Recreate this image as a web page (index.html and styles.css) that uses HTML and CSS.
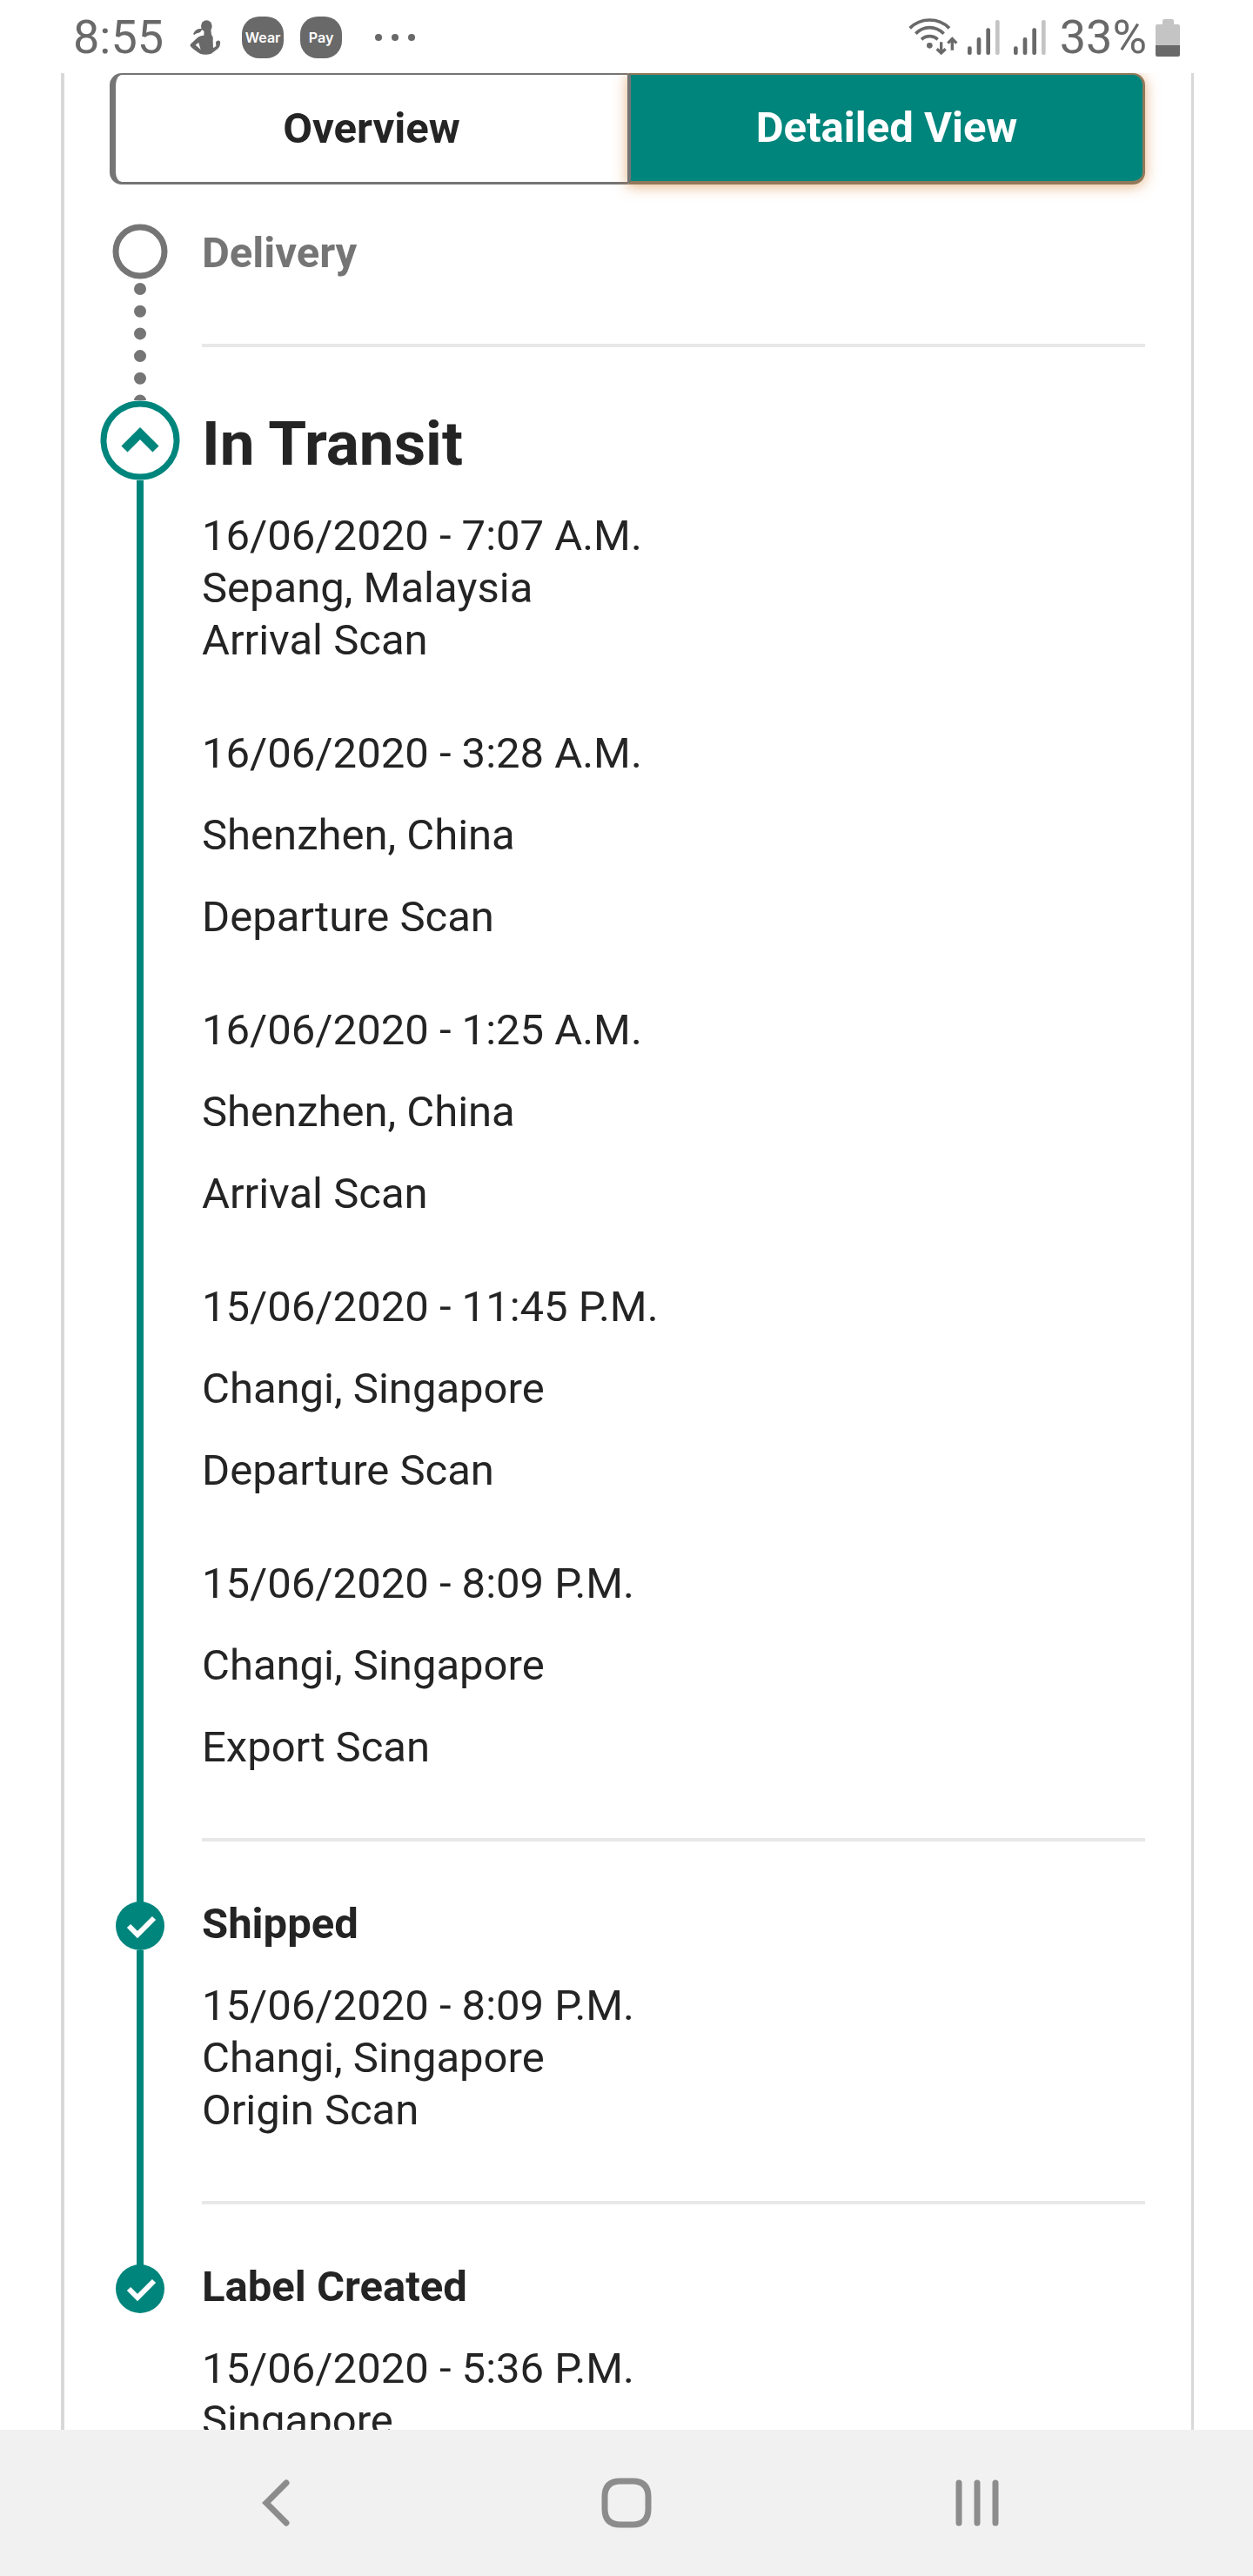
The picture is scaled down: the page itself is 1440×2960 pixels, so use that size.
FILE: index.html
```html
<!DOCTYPE html>
<html lang="en">
<head>
<meta charset="utf-8">
<meta name="viewport" content="width=device-width, initial-scale=1">
<title>Shipment progress</title>
<link rel="stylesheet" href="styles.css">
</head>
<body>
<header class="status">
  <div class="status-left">
    <span class="status-text">8:55</span>
    <svg class="icon-person" viewBox="0 0 108 120" aria-hidden="true"><ellipse cx="58" cy="21" rx="19" ry="20"/><path d="M12 49Q18 34 30 31L44 29Q39 43 28 45Q20 46 16 51Z"/><path fill-rule="evenodd" d="M50 34L73 32L75 50Q82 58 80 70L81 97L91 90L90 76Q98 66 105 74Q107 90 96 100L74 116Q54 122 36 116Q14 104 3 91Q0 86 5 81L28 60Q34 54 49 53ZM20 86L31 78Q34 90 38 102Z"/></svg>
    <span class="app-badge wear">Wear</span>
    <span class="app-badge pay">Pay</span>
    <svg class="icon-more" viewBox="0 0 46 8" aria-hidden="true"><circle cx="4" cy="4" r="4"/><circle cx="23" cy="4" r="4"/><circle cx="42" cy="4" r="4"/></svg>
  </div>
  <div class="status-right">
    <svg class="icon-wifi" viewBox="69 62 171 132" aria-hidden="true"><g fill="none" stroke="#696969" stroke-width="11"><path d="M74 96Q102 68 142 68T210 96"/><path d="M94 115Q115 94 142 94T191 115"/><path d="M114 135Q126 124 142 124T170 135"/><path stroke-width="10" d="M182 144V182M167 168L182 182L197 168M220 172V134M205 148L220 133L235 148"/></g><circle cx="142" cy="156" r="10"/></svg>
    <svg class="icon-signal" viewBox="0 0 111 120" aria-hidden="true"><rect y="91" width="14" height="29" rx="6"/><rect x="32" y="60" width="14" height="60" rx="6"/><rect x="64" y="28" width="14" height="92" rx="6"/><rect class="faint" x="96" width="14" height="120" rx="6"/></svg>
    <svg class="icon-signal second" viewBox="0 0 111 120" aria-hidden="true"><rect y="91" width="14" height="29" rx="6"/><rect x="32" y="60" width="14" height="60" rx="6"/><rect x="64" y="28" width="14" height="92" rx="6"/><rect class="faint" x="96" width="14" height="120" rx="6"/></svg>
    <span class="status-text">33%</span>
    <svg class="icon-battery" viewBox="0 0 28 43" aria-hidden="true"><path class="faint" d="M8 2Q8 0 10 0H19Q21 0 21 2V6H26Q28 6 28 8V30H0V8Q0 6 2 6H8Z"/><path d="M0 30H28V41Q28 43 26 43H2Q0 43 0 41Z"/></svg>
  </div>
</header>

<main class="page">
  <section class="card">
    <div class="tabs">
      <button class="tab" type="button">Overview</button>
      <button class="tab active" type="button">Detailed View</button>
    </div>
    <ol class="steps">
      <li class="step upcoming">
        <div class="rail">
          <svg class="marker small" viewBox="0 0 92 64" aria-hidden="true"><circle cx="46" cy="32" r="28" fill="#fff" stroke="#757575" stroke-width="7"/></svg>
          <svg class="dots" aria-hidden="true"><line x1="46" y1="11" x2="46" y2="145" stroke="#757575" stroke-width="14" stroke-linecap="round" stroke-dasharray="0 25.7"/></svg>
        </div>
        <div class="body"><h2>Delivery</h2></div>
      </li>
      <li class="step current">
        <div class="rail">
          <svg class="marker large" viewBox="0 0 92 92" aria-hidden="true"><circle cx="46" cy="46" r="42" fill="#fff" stroke="#00857c" stroke-width="7"/><path d="M28 56L46 38L64 56" fill="none" stroke="#00857c" stroke-width="10"/></svg>
          <span class="line"></span>
        </div>
        <div class="body">
          <h2>In Transit</h2>
          <div class="scan"><p>16/06/2020 - 7:07 A.M.</p><p>Sepang, Malaysia</p><p>Arrival Scan</p></div>
          <div class="scan spaced"><p>16/06/2020 - 3:28 A.M.</p><p>Shenzhen, China</p><p>Departure Scan</p></div>
          <div class="scan spaced"><p>16/06/2020 - 1:25 A.M.</p><p>Shenzhen, China</p><p>Arrival Scan</p></div>
          <div class="scan spaced"><p>15/06/2020 - 11:45 P.M.</p><p>Changi, Singapore</p><p>Departure Scan</p></div>
          <div class="scan spaced"><p>15/06/2020 - 8:09 P.M.</p><p>Changi, Singapore</p><p>Export Scan</p></div>
        </div>
      </li>
      <li class="step">
        <div class="rail">
          <svg class="marker check" viewBox="0 0 92 60" aria-hidden="true"><path d="M42 0H50V10H42Z" fill="#00857c"/><circle cx="46" cy="32" r="28" fill="#00857c"/><path d="M33 32L43 42L62 23" fill="none" stroke="#fff" stroke-width="6"/></svg>
          <span class="line"></span>
        </div>
        <div class="body">
          <h2>Shipped</h2>
          <div class="scan"><p>15/06/2020 - 8:09 P.M.</p><p>Changi, Singapore</p><p>Origin Scan</p></div>
        </div>
      </li>
      <li class="step">
        <div class="rail">
          <svg class="marker check" viewBox="0 0 92 60" aria-hidden="true"><path d="M42 0H50V10H42Z" fill="#00857c"/><circle cx="46" cy="32" r="28" fill="#00857c"/><path d="M33 32L43 42L62 23" fill="none" stroke="#fff" stroke-width="6"/></svg>
        </div>
        <div class="body">
          <h2>Label Created</h2>
          <div class="scan"><p>15/06/2020 - 5:36 P.M.</p><p>Singapore</p></div>
        </div>
      </li>
    </ol>
  </section>
</main>

<nav class="navbar" aria-label="System">
  <button type="button" aria-label="Back"><svg width="32" height="54" viewBox="0 0 32 54"><path d="M28 4L5 27L28 50"/></svg></button>
  <button type="button" aria-label="Home"><svg width="58" height="58" viewBox="0 0 58 58"><path d="M22 4H36Q54 4 54 22V36Q54 54 36 54H22Q4 54 4 36V22Q4 4 22 4Z"/></svg></button>
  <button type="button" aria-label="Recent apps"><svg width="50" height="54" viewBox="0 0 50 54"><path d="M4 4V50M25 4V50M46 4V50"/></svg></button>
</nav>
</body>
</html>
```
FILE: styles.css
```css
* { box-sizing: border-box; }

body {
  display: flex;
  flex-direction: column;
  height: 100vh;
  margin: 0;
  background: #fff;
  color: #242424;
  font-family: Roboto, "Liberation Sans", sans-serif;
  font-size: 49px;
  line-height: 60px;
}

h2, p, ol { margin: 0; padding: 0; }
svg { display: block; flex: none; }
button { font: inherit; color: inherit; cursor: pointer; }

/* Status bar */
.status {
  display: flex;
  justify-content: space-between;
  flex: none;
  height: 84px;
  padding: 2px 84px 0;
  color: #696969;
  fill: #696969;
}
.status-left, .status-right { display: flex; align-items: center; }
.status-text { font-size: 54px; font-weight: 400; }
.icon-person { width: 36px; height: 40px; margin: 0 24px 0 30px; }
.app-badge {
  display: flex;
  align-items: center;
  justify-content: center;
  width: 48px;
  height: 48px;
  border-radius: 20px;
  background: #696969;
  color: #fff;
  font: 600 16px/24px Inter, sans-serif;
}
.pay { margin: 0 38px 0 19px; }
.icon-more { width: 46px; height: 8px; }
.icon-wifi { width: 57px; height: 44px; }
.icon-signal { width: 37px; height: 40px; margin-left: 11px; }
.second { margin: 0 16px; }
.icon-battery { width: 28px; height: 43px; margin-left: 10px; }
.faint { fill: #c4c4c4; }

/* Scrolling page */
.page {
  flex: 1;
  min-height: 0;
  overflow-y: auto;
  scrollbar-width: none;
  padding: 0 68px 0 70px;
}
.card {
  border: solid #d8d8d8;
  border-width: 0 3px 0 4px;
  padding: 0 53px 0 41px;
}

.tabs {
  display: grid;
  grid-template-columns: 1fr 1fr;
  height: 128px;
  margin: 0 0 45px 11px;
}
.tab {
  border: 3px solid #757575;
  border-width: 2px 0 3px 7px;
  border-radius: 14px 0 0 14px;
  background: #fff;
  padding: 0;
  font-weight: 700;
}
.tab.active {
  border-color: #92795a;
  border-width: 2px 3px 4px 4px;
  border-left-color: #757575;
  border-radius: 0 14px 14px 0;
  background: #00857c;
  color: #fff;
  box-shadow: 0 2px 16px rgba(216, 128, 50, 0.6);
}

/* Timeline */
.steps { list-style: none; }
.step {
  display: grid;
  grid-template-columns: 92px 1fr;
  column-gap: 25px;
}
.rail { display: flex; flex-direction: column; align-items: center; }
.marker { width: 92px; }
.small { height: 64px; }
.large { height: 92px; }
.check { height: 60px; }
.line { flex: 1; width: 8px; background: #00857c; }
.dots { width: 92px; height: 139px; }

.body { margin-bottom: 65px; padding-bottom: 74px; border-bottom: 4px solid #e8e8e8; }
.step:last-child .body { border-bottom: 0; }
.step h2 { font-size: 49px; line-height: 60px; font-weight: 700; }
.upcoming { color: #757575; }
.upcoming .body { margin-bottom: 61px; padding-top: 4px; }
.current .body { padding-top: 8px; }
.current h2 { font-size: 71px; line-height: 84px; }

.scan { display: flex; flex-direction: column; margin-top: 34px; }
.spaced { gap: 34px; margin-top: 70px; }

/* System navigation */
.navbar {
  display: grid;
  grid-template-columns: repeat(3, 1fr);
  flex: none;
  height: 168px;
  padding: 0 8%;
  background: #f1f1f1;
}
.navbar button {
  display: flex;
  align-items: center;
  justify-content: center;
  border: 0;
  padding: 0;
  background: none;
}
.navbar svg { fill: none; stroke: #8c8c8c; stroke-width: 7; stroke-linecap: round; }
```
